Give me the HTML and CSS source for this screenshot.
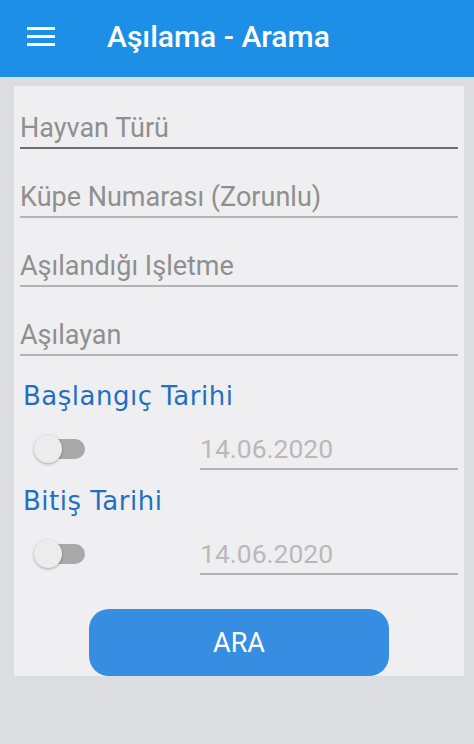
FILE: index.html
```html
<!DOCTYPE html>
<html lang="tr">
<head>
<meta charset="utf-8">
<title>Aşılama - Arama</title>
<link rel="stylesheet" href="styles.css">
</head>
<body>
<header class="appbar">
  <svg class="menu-icon" width="28" height="21" viewBox="0 0 28 21" aria-hidden="true">
    <rect x="0" y="1" width="28" height="3" fill="#ffffff"/>
    <rect x="0" y="9" width="28" height="3" fill="#ffffff"/>
    <rect x="0" y="17" width="28" height="3" fill="#ffffff"/>
  </svg>
  <h1 class="title">Aşılama - Arama</h1>
</header>
<main class="page">
  <section class="card">
    <div class="field field-active">Hayvan Türü</div>
    <div class="field">Küpe Numarası (Zorunlu)</div>
    <div class="field">Aşılandığı Işletme</div>
    <div class="field field-last">Aşılayan</div>

    <div class="section-label">Başlangıç Tarihi</div>
    <div class="date-row">
      <div class="toggle-cell">
        <span class="toggle"><span class="toggle-thumb"></span></span>
      </div>
      <div class="date-field">14.06.2020</div>
    </div>

    <div class="section-label">Bitiş Tarihi</div>
    <div class="date-row">
      <div class="toggle-cell">
        <span class="toggle"><span class="toggle-thumb"></span></span>
      </div>
      <div class="date-field">14.06.2020</div>
    </div>

    <div class="button-row">
      <button class="search-btn" type="button">ARA</button>
    </div>
  </section>
</main>
</body>
</html>
```
FILE: styles.css
```css
html, body {
  margin: 0;
  padding: 0;
}
body {
  background: #dcdde1;
  font-family: Roboto, "Liberation Sans", Arial, sans-serif;
  width: 474px;
  height: 744px;
  overflow: hidden;
}
.appbar {
  height: 77px;
  background: #1e8fe6;
  display: flex;
  align-items: center;
  padding-left: 27px;
  box-sizing: border-box;
}
.menu-icon {
  display: block;
  margin-top: -4px;
}
.title {
  margin: -4px 0 0 52px;
  color: #ffffff;
  font-size: 30px;
  font-weight: 500;
  line-height: 30px;
}
.page {
  padding: 9px 10px 0 14px;
}
.card {
  background: #efeff1;
  padding: 27px 6px 0 6px;
  display: flex;
  flex-direction: column;
}
.field {
  font-size: 27px;
  line-height: 30px;
  color: #8f8f8f;
  padding-bottom: 4px;
  border-bottom: 2px solid #b4b4b4;
  margin-bottom: 33px;
}
.field-active {
  border-bottom-color: #6e6e6e;
}
.field-last {
  margin-bottom: 25px;
}
.section-label {
  font-family: "DejaVu Sans", Lato, sans-serif;
  font-size: 26px;
  letter-spacing: 0.5px;
  line-height: 30px;
  color: #1f70c3;
  padding-left: 3px;
  margin-bottom: 23px;
}
.date-row {
  display: flex;
  align-items: flex-start;
  margin-bottom: 16px;
}
.toggle-cell {
  width: 180px;
  height: 36px;
  display: flex;
  align-items: center;
  padding-left: 15px;
  box-sizing: border-box;
}
.toggle {
  position: relative;
  display: block;
  width: 50px;
  height: 20px;
  border-radius: 10px;
  background: #a9a9a9;
  margin-top: -6px;
}
.toggle-thumb {
  position: absolute;
  left: -1px;
  top: -4px;
  width: 28px;
  height: 28px;
  border-radius: 50%;
  background: #ececec;
  box-shadow: 0 1px 3px rgba(0, 0, 0, 0.3);
}
.date-field {
  flex: 1;
  font-size: 26.5px;
  line-height: 30px;
  color: #b9b9b9;
  padding-bottom: 4px;
  border-bottom: 2px solid #b4b4b4;
}
.button-row {
  display: flex;
  justify-content: center;
  margin-top: 18px;
}
.search-btn {
  width: 300px;
  height: 67px;
  border: none;
  border-radius: 20px;
  background: #378de2;
  color: #ffffff;
  font-family: Roboto, "Liberation Sans", Arial, sans-serif;
  font-size: 27px;
  font-weight: 400;
  padding: 0;
}
```
